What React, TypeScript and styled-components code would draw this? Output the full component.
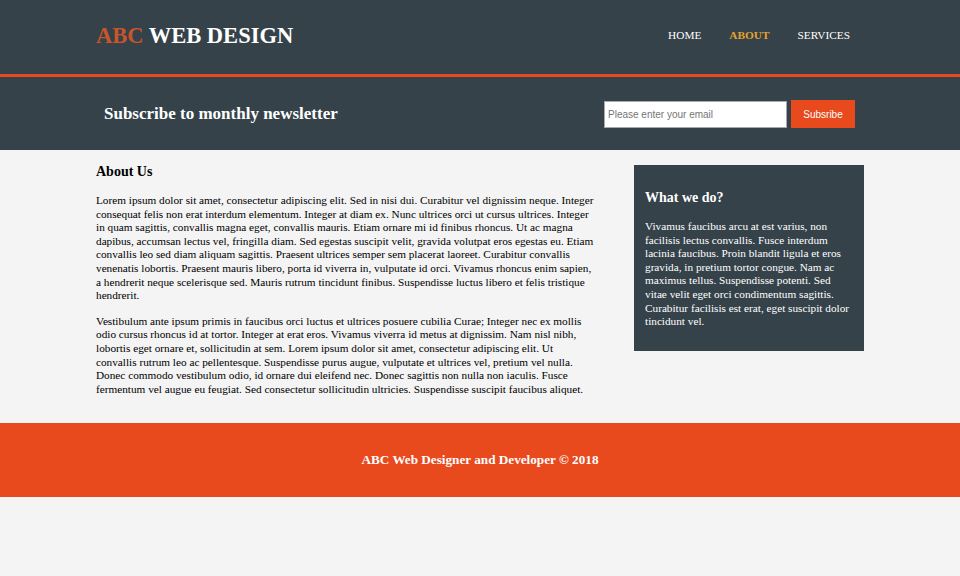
import React from "react";
import styled, { createGlobalStyle } from "styled-components";

const GlobalStyle = createGlobalStyle`
  html, body { margin: 0; padding: 0; }
  body {
    background: #f4f4f4;
    font-family: "Liberation Serif", "Times New Roman", serif;
    font-size: 11.25px;
    color: #000;
  }
`;

const Container = styled.div`
  width: 768px;
  margin: 0 auto;
  display: flex;
  align-items: flex-start;
  justify-content: space-between;
`;

const Header = styled.header`
  background: #35424a;
  color: #fff;
  padding-top: 22px;
  height: 52px;
  border-bottom: 3px solid #e8491d;
`;

const Brand = styled.h1`
  margin: 0;
  font-size: 22.5px;
  font-weight: bold;
  line-height: 28px;
`;

const BrandAccent = styled.span`
  color: #c9552b;
`;

const Nav = styled.ul`
  list-style: none;
  margin: 7px 0 0;
  padding: 0;
  display: flex;
`;

const NavItem = styled.li<{ $current?: boolean }>`
  padding: 0 14px;
  a {
    color: ${(p) => (p.$current ? "#e3a32c" : "#ffffff")};
    font-weight: ${(p) => (p.$current ? "bold" : "normal")};
    text-decoration: none;
    text-transform: uppercase;
    font-size: 11.3px;
  }
`;

const Newsletter = styled.section`
  background: #35424a;
  color: #fff;
  height: 73px;
  display: flex;
  align-items: center;
`;

const NewsInner = styled.div`
  width: 751px;
  margin: 0 0 0 104px;
  display: flex;
  align-items: center;
  justify-content: space-between;
`;

const NewsTitle = styled.h1`
  margin: 0;
  font-size: 17px;
  font-weight: bold;
`;

const Form = styled.form`
  display: flex;
  align-items: center;
  gap: 4px;
  margin-top: 1px;
`;

const EmailInput = styled.input`
  box-sizing: border-box;
  width: 183px;
  height: 27px;
  padding: 3px;
  border: 1px solid #a9a9a9;
  font-family: "Liberation Sans", Arial, sans-serif;
  font-size: 10px;
  &::placeholder { color: #757575; }
`;

const Button = styled.button`
  height: 28px;
  width: 64px;
  background: #e8491d;
  border: 0;
  padding: 0;
  color: #fff;
  font-family: "Liberation Sans", Arial, sans-serif;
  font-size: 10px;
`;

const MainCol = styled.article`
  width: 499px;
`;

const Title = styled.h1`
  font-size: 14px;
  margin: 14px 0;
  line-height: 16px;
`;

const Para = styled.p`
  margin: 12px 0;
  line-height: 13.6px;
`;

const Sidebar = styled.aside`
  width: 230px;
  margin-top: 15px;
`;

const Dark = styled.div`
  background: #35424a;
  color: #fff;
  padding: 11px;
  padding-bottom: 10px;
`;

const SideTitle = styled.h3`
  font-size: 14px;
  line-height: 16px;
  margin: 14px 0;
`;

const Footer = styled.footer`
  margin-top: 15px;
  padding: 15px;
  background: #e8491d;
  color: #fff;
  text-align: center;
`;

const FooterText = styled.p`
  margin: 14px 0;
  font-size: 13.2px;
  line-height: 16px;
  font-weight: bold;
`;

export default function App() {
  return (
    <>
      <GlobalStyle />
      <Header>
        <Container>
          <Brand>
            <BrandAccent>ABC</BrandAccent> WEB DESIGN
          </Brand>
          <nav>
            <Nav>
              <NavItem><a href="#">Home</a></NavItem>
              <NavItem $current><a href="#">About</a></NavItem>
              <NavItem><a href="#">Services</a></NavItem>
            </Nav>
          </nav>
        </Container>
      </Header>
      <Newsletter>
        <NewsInner>
          <NewsTitle>Subscribe to monthly newsletter</NewsTitle>
          <Form onSubmit={(e) => e.preventDefault()}>
            <EmailInput type="email" placeholder="Please enter your email" />
            <Button type="submit">Subsribe</Button>
          </Form>
        </NewsInner>
      </Newsletter>
      <Container>
        <MainCol>
          <Title>About Us</Title>
          <Para>
            Lorem ipsum dolor sit amet, consectetur adipiscing elit. Sed in nisi dui. Curabitur vel dignissim neque. Integer consequat felis non erat interdum elementum. Integer at diam ex. Nunc ultrices orci ut cursus ultrices. Integer in quam sagittis, convallis magna eget, convallis mauris. Etiam ornare mi id finibus rhoncus. Ut ac magna dapibus, accumsan lectus vel, fringilla diam. Sed egestas suscipit velit, gravida volutpat eros egestas eu. Etiam convallis leo sed diam aliquam sagittis. Praesent ultrices semper sem placerat laoreet. Curabitur convallis venenatis lobortis. Praesent mauris libero, porta id viverra in, vulputate id orci. Vivamus rhoncus enim sapien, a hendrerit neque scelerisque sed. Mauris rutrum tincidunt finibus. Suspendisse luctus libero et felis tristique hendrerit.
          </Para>
          <Para>
            Vestibulum ante ipsum primis in faucibus orci luctus et ultrices posuere cubilia Curae; Integer nec ex mollis odio cursus rhoncus id at tortor. Integer at erat eros. Vivamus viverra id metus at dignissim. Nam nisl nibh, lobortis eget ornare et, sollicitudin at sem. Lorem ipsum dolor sit amet, consectetur adipiscing elit. Ut convallis rutrum leo ac pellentesque. Suspendisse purus augue, vulputate et ultrices vel, pretium vel nulla. Donec commodo vestibulum odio, id ornare dui eleifend nec. Donec sagittis non nulla non iaculis. Fusce fermentum vel augue eu feugiat. Sed consectetur sollicitudin ultricies. Suspendisse suscipit faucibus aliquet.
          </Para>
        </MainCol>
        <Sidebar>
          <Dark>
            <SideTitle>What we do?</SideTitle>
            <Para>
              Vivamus faucibus arcu at est varius, non facilisis lectus convallis. Fusce interdum lacinia faucibus. Proin blandit ligula et eros gravida, in pretium tortor congue. Nam ac maximus tellus. Suspendisse potenti. Sed vitae velit eget orci condimentum sagittis. Curabitur facilisis est erat, eget suscipit dolor tincidunt vel.
            </Para>
          </Dark>
        </Sidebar>
      </Container>
      <Footer>
        <FooterText>ABC Web Designer and Developer © 2018</FooterText>
      </Footer>
    </>
  );
}
